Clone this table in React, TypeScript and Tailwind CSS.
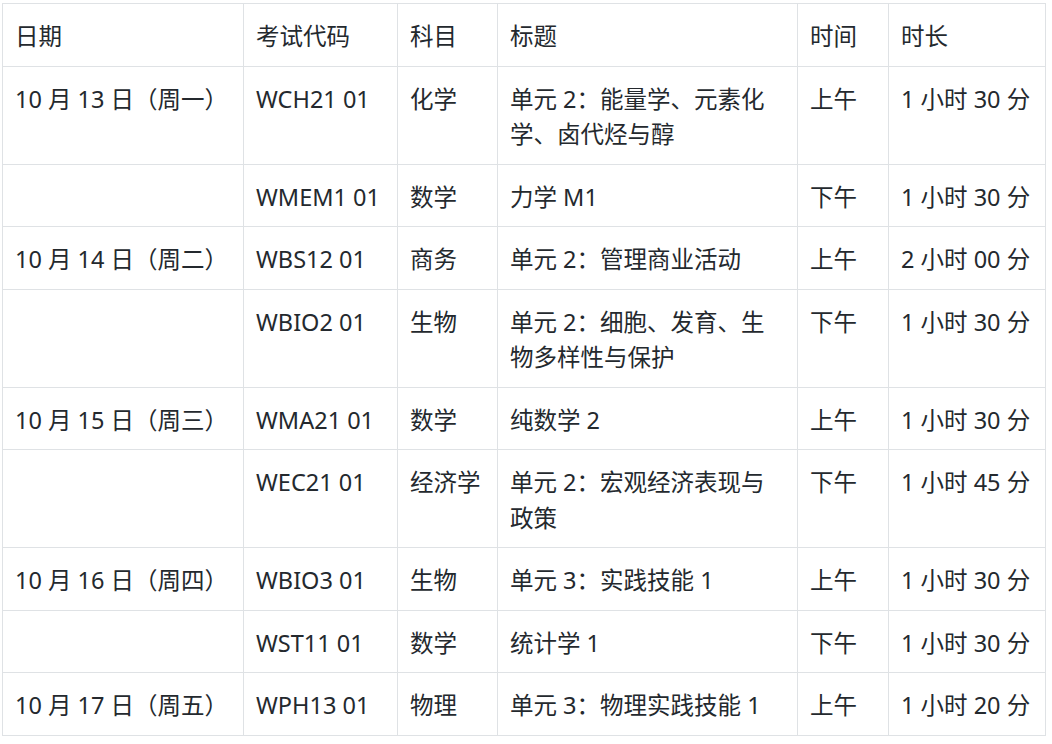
import React from "react";

const rows: string[][] = [
  ["10 月 13 日（周一）", "WCH21 01", "化学", "单元 2：能量学、元素化学、卤代烃与醇", "上午", "1 小时 30 分"],
  ["", "WMEM1 01", "数学", "力学 M1", "下午", "1 小时 30 分"],
  ["10 月 14 日（周二）", "WBS12 01", "商务", "单元 2：管理商业活动", "上午", "2 小时 00 分"],
  ["", "WBIO2 01", "生物", "单元 2：细胞、发育、生物多样性与保护", "下午", "1 小时 30 分"],
  ["10 月 15 日（周三）", "WMA21 01", "数学", "纯数学 2", "上午", "1 小时 30 分"],
  ["", "WEC21 01", "经济学", "单元 2：宏观经济表现与政策", "下午", "1 小时 45 分"],
  ["10 月 16 日（周四）", "WBIO3 01", "生物", "单元 3：实践技能 1", "上午", "1 小时 30 分"],
  ["", "WST11 01", "数学", "统计学 1", "下午", "1 小时 30 分"],
  ["10 月 17 日（周五）", "WPH13 01", "物理", "单元 3：物理实践技能 1", "上午", "1 小时 20 分"],
];

const headers = ["日期", "考试代码", "科目", "标题", "时间", "时长"];
const widths = [241, 154, 100, 300, 91, 157];

export default function App() {
  return (
    <div
      className="w-[1052px] h-[744px] bg-white pl-[2px] pt-[3px] overflow-hidden"
      style={{ fontFamily: '"Noto Sans", "Noto Sans CJK SC", sans-serif' }}
    >
      <table className="table-fixed border-collapse w-[1043px] text-[23.5px] leading-[35.5px] text-[#24292e]">
        <colgroup>
          {widths.map((w, i) => (
            <col key={i} style={{ width: w }} />
          ))}
        </colgroup>
        <thead>
          <tr>
            {headers.map((h) => (
              <th
                key={h}
                className="border border-[#dfe2e5] pl-[12px] pr-[8px] pt-[15px] pb-[11px] text-left align-top font-normal whitespace-nowrap"
              >
                {h}
              </th>
            ))}
          </tr>
        </thead>
        <tbody>
          {rows.map((r, i) => (
            <tr key={i}>
              {r.map((c, j) => (
                <td
                  key={j}
                  className={
                    "border border-[#dfe2e5] pl-[12px] pt-[15px] pb-[11px] text-left align-top " +
                    (j === 3 ? "pr-[14px]" : "pr-[8px] whitespace-nowrap")
                  }
                >
                  {c}
                </td>
              ))}
            </tr>
          ))}
        </tbody>
      </table>
    </div>
  );
}
